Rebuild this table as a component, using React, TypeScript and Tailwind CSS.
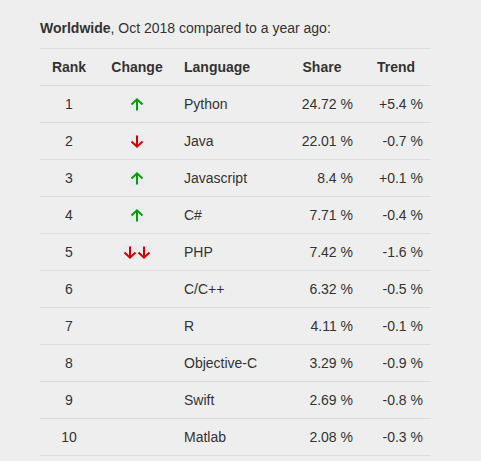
import React from "react";

const rows: [number, string, string, string, string][] = [
  [1, "up", "Python", "24.72 %", "+5.4 %"],
  [2, "down", "Java", "22.01 %", "-0.7 %"],
  [3, "up", "Javascript", "8.4 %", "+0.1 %"],
  [4, "up", "C#", "7.71 %", "-0.4 %"],
  [5, "down2", "PHP", "7.42 %", "-1.6 %"],
  [6, "", "C/C++", "6.32 %", "-0.5 %"],
  [7, "", "R", "4.11 %", "-0.1 %"],
  [8, "", "Objective-C", "3.29 %", "-0.9 %"],
  [9, "", "Swift", "2.69 %", "-0.8 %"],
  [10, "", "Matlab", "2.08 %", "-0.3 %"],
];

function Up() {
  return (
    <svg width="14" height="15" viewBox="0 0 14 15" className="bg-[#e8ecee]">
      <path d="M7 2 L7 13.5" stroke="#0a9a0a" strokeWidth="2" fill="none" />
      <path d="M1.5 7.5 L7 2.3 L12.5 7.5" stroke="#0a9a0a" strokeWidth="2" fill="none" />
    </svg>
  );
}
function Down() {
  return (
    <svg width="14" height="15" viewBox="0 0 14 15" className="bg-[#e8ecee]">
      <path d="M7 1.5 L7 13" stroke="#d40000" strokeWidth="2" fill="none" />
      <path d="M1.5 7.5 L7 12.7 L12.5 7.5" stroke="#d40000" strokeWidth="2" fill="none" />
    </svg>
  );
}

export default function App() {
  return (
    <div className="min-h-[461px] bg-[#eeeeee] pl-[40px] pt-[18px] text-[14px] text-[#333333]" style={{ fontFamily: '"Liberation Sans", Arial, sans-serif' }}>
      <div className="w-[391px]">
        <p className="mb-[10px] leading-[20px]">
          <b>Worldwide</b>, Oct 2018 compared to a year ago:
        </p>
        <table className="w-[391px] border-collapse table-fixed">
          <thead>
            <tr className="border-t border-[#dddddd] h-[37px]">
              <th className="w-[58px] text-center font-bold">Rank</th>
              <th className="w-[78px] text-center font-bold">Change</th>
              <th className="w-[107px] text-left pl-[8px] font-bold">Language</th>
              <th className="w-[78px] text-center font-bold">Share</th>
              <th className="w-[70px] text-center font-bold">Trend</th>
            </tr>
          </thead>
          <tbody>
            {rows.map(([r, c, l, s, t]) => (
              <tr key={r} className="border-t border-[#dddddd] h-[37px]">
                <td className="text-center">{r}</td>
                <td>
                  <div className="flex justify-center">
                    {c === "up" && <Up />}
                    {c === "down" && <Down />}
                    {c === "down2" && (
                      <>
                        <Down />
                        <Down />
                      </>
                    )}
                  </div>
                </td>
                <td className="pl-[8px]">{l}</td>
                <td className="text-right pr-[8px]">{s}</td>
                <td className="text-right pr-[8px]">{t}</td>
              </tr>
            ))}
            <tr className="border-t border-[#dddddd]"><td colSpan={5}></td></tr>
          </tbody>
        </table>
      </div>
    </div>
  );
}
